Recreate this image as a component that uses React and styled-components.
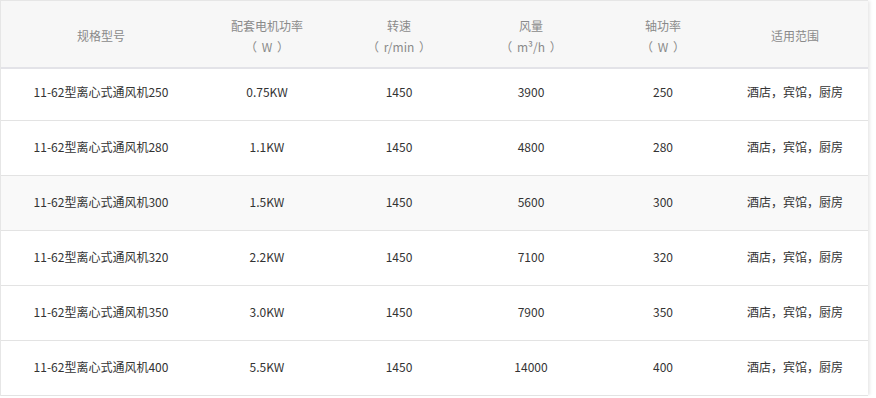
import React from 'react';
import styled, { createGlobalStyle } from 'styled-components';

const GlobalStyle = createGlobalStyle`
  html, body {
    margin: 0;
    padding: 0;
    background: #fff;
  }
  body {
    font-family: "Noto Sans CJK SC", "Noto Sans", sans-serif;
    font-size: 12px;
  }
`;

const Table = styled.div`
  width: 867px;
  border-top: 1px solid #e6e6e6;
  border-left: 1px solid #e6e6e6;
  box-shadow: 3px 0 3px -1px rgba(0, 0, 0, 0.09);
`;

const Row = styled.div`
  display: grid;
  grid-template-columns: 200px repeat(5, 132px) 1fr;
  height: ${(p) => p.$height}px;
  padding-bottom: ${(p) => p.$lift || 0}px;
  background: ${(p) => (p.$shade ? '#f9f9f9' : '#fff')};
  border-bottom: 1px solid #e3e3e3;
  box-sizing: border-box;
`;

const HeadRow = styled(Row)`
  background: #f7f7f7;
  border-bottom: 2px solid #e3e3e8;
`;

const Cell = styled.div`
  display: flex;
  flex-direction: column;
  align-items: center;
  justify-content: center;
  color: #333;
  line-height: 21px;
  white-space: nowrap;
`;

const HeadCell = styled(Cell)`
  color: #8a8a8a;
  padding-top: 3px;
`;

const Unit = styled.span`
  color: #8a8a8a;
  word-spacing: 2px;
`;

const headers = [
  { title: '规格型号' },
  { title: '配套电机功率', unit: '（ W ）' },
  { title: '转速', unit: '（ r/min ）' },
  { title: '风量', unit: '（ m³/h ）' },
  { title: '轴功率', unit: '（ W ）' },
  { title: '适用范围' },
];

const rows = [
  ['250', '0.75KW', '1450', '3900', '250'],
  ['280', '1.1KW', '1450', '4800', '280'],
  ['300', '1.5KW', '1450', '5600', '300'],
  ['320', '2.2KW', '1450', '7100', '320'],
  ['350', '3.0KW', '1450', '7900', '350'],
  ['400', '5.5KW', '1450', '14000', '400'],
];

export default function App() {
  return (
    <>
      <GlobalStyle />
      <Table>
        <HeadRow $height={68}>
          {headers.map((h) => (
            <HeadCell key={h.title}>
              <span>{h.title}</span>
              {h.unit && <Unit>{h.unit}</Unit>}
            </HeadCell>
          ))}
          <HeadCell />
        </HeadRow>
        {rows.map((r, i) => (
          <Row
            key={r[0]}
            $height={i === 0 ? 52 : 55}
            $lift={i === 0 ? 7 : 3}
            $shade={i === 2}
          >
            <Cell>11-62型离心式通风机{r[0]}</Cell>
            <Cell>{r[1]}</Cell>
            <Cell>{r[2]}</Cell>
            <Cell>{r[3]}</Cell>
            <Cell>{r[4]}</Cell>
            <Cell>酒店，宾馆，厨房</Cell>
            <Cell />
          </Row>
        ))}
      </Table>
    </>
  );
}
